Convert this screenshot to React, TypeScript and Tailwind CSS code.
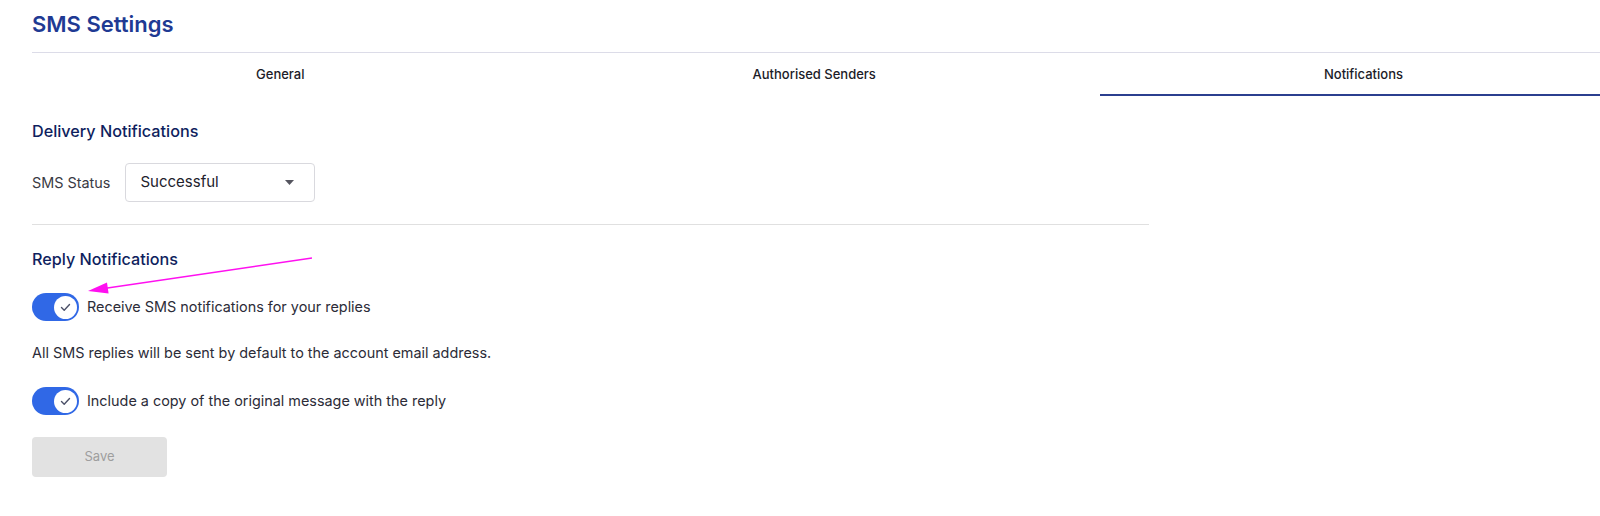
import React, { useState } from 'react';

const tabs = ['General', 'Authorised Senders', 'Notifications'];

const Toggle: React.FC<{ on: boolean; onChange: () => void }> = ({ on, onChange }) => (
  <button
    type="button"
    onClick={onChange}
    className={`relative flex h-[28px] w-[47px] shrink-0 items-center rounded-full px-[2px] ${
      on ? 'justify-end bg-[#3068e6]' : 'justify-start bg-[#c4c4cc]'
    }`}
  >
    <span className="flex h-[23px] w-[23px] items-center justify-center rounded-full bg-white">
      {on && (
        <svg width="11" height="9" viewBox="0 0 11 9" fill="none">
          <path d="M1.5 4.6 L4.2 7.2 L9.5 1.6" stroke="#4b5068" strokeWidth="1.4" strokeLinecap="round" strokeLinejoin="round" />
        </svg>
      )}
    </span>
  </button>
);

const App: React.FC = () => {
  const [active, setActive] = useState(2);
  const [receive, setReceive] = useState(true);
  const [includeCopy, setIncludeCopy] = useState(true);

  return (
    <div className="relative min-h-[516px] w-full overflow-hidden bg-white font-['Inter',sans-serif] text-[#2c2c38]">
      <div className="w-[1627px] pl-8">
        <div className="border-b border-[#dcdce8] pt-[9px] pb-[13px]">
          <h1 className="text-[22px] leading-[30px] font-semibold text-[#1f3a93]">SMS Settings</h1>
        </div>

        <div className="flex">
          {tabs.map((tab, i) => (
            <button
              key={tab}
              type="button"
              onClick={() => setActive(i)}
              className={`flex h-[43px] flex-auto items-center justify-center border-b-2 text-[13px] font-medium text-[#1c1c28] ${
                active === i ? 'border-[#2b3f8f]' : 'border-transparent'
              }`}
            >
              <span className="pt-[2px]">{tab}</span>
            </button>
          ))}
        </div>

        <div className="w-[70%]">
          <h2 className="pt-[23px] text-[16.2px] leading-6 font-medium text-[#0f1f5e]">Delivery Notifications</h2>

          <div className="mt-5 flex items-center gap-[15px]">
            <span className="text-[14.4px] text-[#3a3a44]">SMS Status</span>
            <div className="flex h-[39px] w-[190px] items-center justify-between rounded border border-[#d9d9de] pr-[20px] pl-[14px]">
              <span className="text-[15px] text-[#22222c]">Successful</span>
              <svg width="9" height="5" viewBox="0 0 9 5">
                <path d="M0 0 H9 L4.5 5 Z" fill="#55555f" />
              </svg>
            </div>
          </div>

          <div className="mt-[22px] border-t border-[#e0e0e0]" />

          <h2 className="pt-[22px] text-[16.2px] leading-6 font-medium text-[#0f1f5e]">Reply Notifications</h2>

          <div className="mt-[22px] flex items-center gap-2">
            <Toggle on={receive} onChange={() => setReceive(!receive)} />
            <span className="text-[14.4px]">Receive SMS notifications for your replies</span>
          </div>

          <p className="mt-[22px] text-[14.4px] leading-5">All SMS replies will be sent by default to the account email address.</p>

          <div className="mt-[24px] flex items-center gap-2">
            <Toggle on={includeCopy} onChange={() => setIncludeCopy(!includeCopy)} />
            <span className="text-[14.4px]">Include a copy of the original message with the reply</span>
          </div>

          <button
            type="button"
            disabled
            className="mt-[22px] h-[40px] w-[135px] rounded bg-[#e2e2e2] text-[13px] text-[#9e9e9e]"
          >
            Save
          </button>
        </div>
      </div>

      {/* annotation arrow */}
      <svg className="pointer-events-none absolute top-0 left-0" width="400" height="320">
        <line x1="312" y1="258" x2="104" y2="288.5" stroke="#ff10f0" strokeWidth="1.5" />
        <polygon points="88,291 107,282.6 108.6,293.6" fill="#ff10f0" />
      </svg>
    </div>
  );
};

export default App;
